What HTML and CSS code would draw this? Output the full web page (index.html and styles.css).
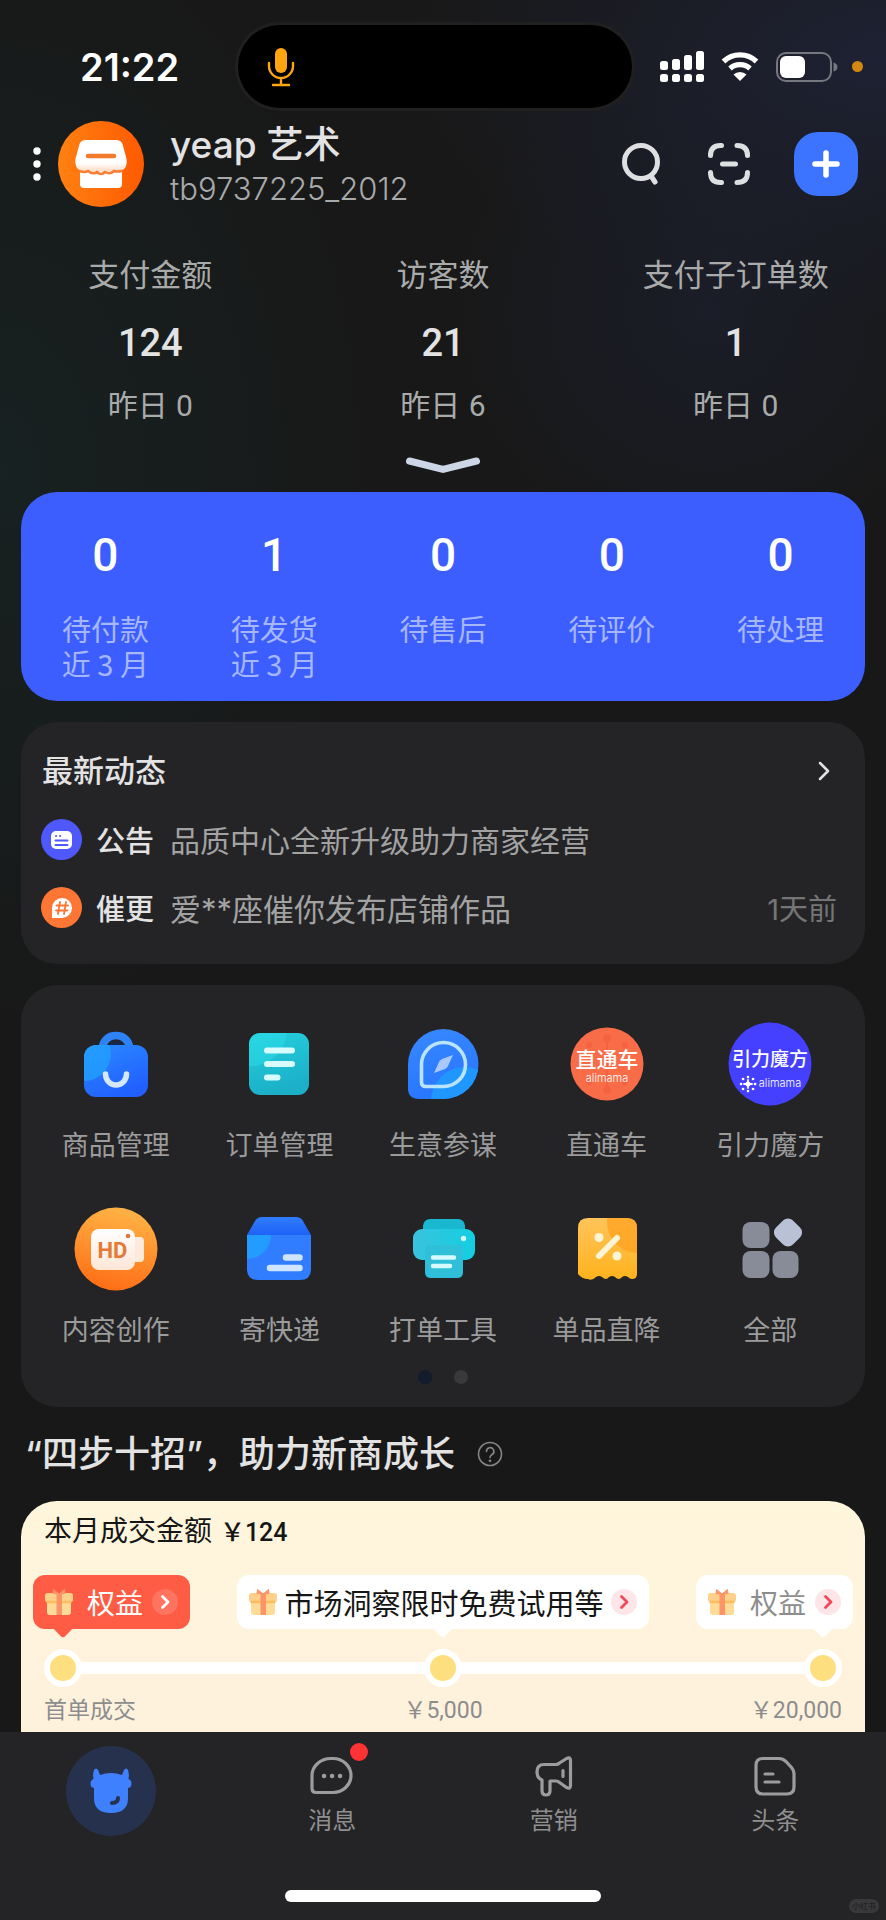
FILE: index.html
```html
<!DOCTYPE html>
<html lang="zh-CN">

<head>
    <meta charset="UTF-8" />
    <meta name="viewport" content="width=device-width, initial-scale=1.0" />
    <title>店铺工作台</title>
    <link rel="stylesheet" href="styles.css">
</head>

<body>
    <main class="page">
        <div class="status-bar">
            <span class="status-time">21:22</span>
            <div class="island">
                <svg width="28" height="40" viewBox="0 0 28 40" fill="none" stroke="#ffa50f" stroke-width="2.4" stroke-linecap="round">
                    <rect x="8" y="1" width="12" height="25" rx="6" fill="#ffa50f" stroke="none" />
                    <path d="M2 16v3a12 12 0 0 0 24 0v-3M14 31v6M6 38h16" />
                </svg>
            </div>
            <div class="status-icons">
                <svg width="44" height="32" viewBox="0 0 44 32" fill="#fff">
                    <rect x="0" y="10" width="8" height="9" rx="2.5" />
                    <rect x="12" y="8" width="8" height="11" rx="2.5" />
                    <rect x="24" y="4" width="8" height="15" rx="2.5" />
                    <rect x="36" y="0" width="8" height="19" rx="2.5" />
                    <rect x="0" y="23" width="8" height="8" rx="2.5" />
                    <rect x="12" y="23" width="8" height="8" rx="2.5" />
                    <rect x="24" y="23" width="8" height="8" rx="2.5" />
                    <rect x="36" y="23" width="8" height="8" rx="2.5" />
                </svg>
                <svg width="38" height="29" viewBox="0 0 38 29">
                    <path d="M2.500 9.500a24 24 0 0 1 33 0M9 16.500a15 15 0 0 1 20 0" fill="none" stroke="#fff" stroke-width="5.200" />
                    <path d="M12.500 22.500a9.500 9.500 0 0 1 13 0L19 29z" fill="#fff" />
                </svg>
                <svg width="62" height="30" viewBox="0 0 62 30">
                    <rect x="1" y="1" width="54" height="28" rx="9" fill="none" stroke="#77787f" stroke-width="2" />
                    <rect x="4" y="4" width="25" height="22" rx="6" fill="#fff" />
                    <path d="M57.500 10.500q4 1 4 4.500t-4 4.500z" fill="#77787f" />
                </svg>
                <span class="mic-dot"></span>
            </div>
        </div>

        <header class="shop-header">
            <button class="icon-btn more-btn" type="button" aria-label="更多">
                <svg width="8" height="34" viewBox="0 0 8 34" fill="#fff">
                    <circle cx="4" cy="4" r="3.700" />
                    <circle cx="4" cy="17" r="3.700" />
                    <circle cx="4" cy="30" r="3.700" />
                </svg>
            </button>
            <svg class="avatar" width="86" height="86" viewBox="0 0 86 86">
                <defs>
                    <linearGradient id="shopBg" x1="0" y1="0" x2="1" y2="0">
                        <stop offset="0" stop-color="#ff8112" />
                        <stop offset="1" stop-color="#ff5a00" />
                    </linearGradient>
                    <linearGradient id="awning" x1="0" y1="0" x2="0" y2="1">
                        <stop offset="0.700" stop-color="#fff" />
                        <stop offset="1" stop-color="#ffd4b8" />
                    </linearGradient>
                </defs>
                <circle cx="43" cy="43" r="43" fill="url(#shopBg)" />
                <path d="M22 48h42v15q0 4-4 4H26q-4 0-4-4z" fill="#fff" />
                <path d="M28 19h30q5 0 6.500 4l4 15q.5 2 0 5-1 7-8.500 7-5 3-9 0-4 4-8 0-4 4-8 0-4 3-9 0-7.500 0-8.500-7-.5-3 0-5l4-15q1.500-4 6.500-4z" fill="url(#awning)" />
                <path d="M22 50q5 2 8 0 5 4 9 1 4 4 8 0 5 3 9-1 4 1 8 0" fill="none" stroke="#f97d33" stroke-width="2.500" />
                <path d="M30 35h26" stroke="#f47a2e" stroke-width="4.500" stroke-linecap="round" />
            </svg>
            <div class="shop-info">
                <h1 class="shop-name">yeap 艺术</h1>
                <p class="shop-id">tb9737225_2012</p>
            </div>
            <div class="header-actions">
                <button class="icon-btn" type="button" aria-label="搜索">
                    <svg width="42" height="42" viewBox="0 0 42 42" fill="none" stroke="#dedfe1" stroke-width="5" stroke-linecap="round">
                        <circle cx="19" cy="19" r="16.500" />
                        <path d="M29 33l4 6" />
                    </svg>
                </button>
                <button class="icon-btn" type="button" aria-label="扫一扫">
                    <svg width="42" height="42" viewBox="0 0 42 42" fill="none" stroke="#dedfe1" stroke-width="5" stroke-linecap="round">
                        <path d="M2.500 12.500q0-10 10-10h1M29 2.500q10.500 0 10.500 10M2.500 29.500q0 10 10 10h1M29 39.500q10.500 0 10.500-10M14.500 21h13" />
                    </svg>
                </button>
                <button class="icon-btn add-btn" type="button" aria-label="新增">
                    <svg width="28" height="28" viewBox="0 0 28 28" stroke="#fff" stroke-width="5.500" stroke-linecap="round">
                        <path d="M14 3v22M3 14h22" />
                    </svg>
                </button>
            </div>
        </header>

        <section class="stats">
            <div class="stat">
                <span class="stat-label">支付金额</span>
                <span class="stat-value">124</span>
                <span class="stat-prev">昨日 <b>0</b></span>
            </div>
            <div class="stat">
                <span class="stat-label">访客数</span>
                <span class="stat-value">21</span>
                <span class="stat-prev">昨日 <b>6</b></span>
            </div>
            <div class="stat">
                <span class="stat-label">支付子订单数</span>
                <span class="stat-value">1</span>
                <span class="stat-prev">昨日 <b>0</b></span>
            </div>
        </section>

        <button class="icon-btn expand-btn" type="button" aria-label="展开">
            <svg width="76" height="18" viewBox="0 0 76 18" fill="none" stroke="#cdd6e6" stroke-width="7" stroke-linecap="round">
                <path d="M4.500 5L38 13.500 71.500 5" />
            </svg>
        </button>

        <section class="card orders">
            <a class="order" href="#"><span class="order-num">0</span><span class="order-label">待付款<br>近 3 月</span></a>
            <a class="order" href="#"><span class="order-num">1</span><span class="order-label">待发货<br>近 3 月</span></a>
            <a class="order" href="#"><span class="order-num">0</span><span class="order-label">待售后</span></a>
            <a class="order" href="#"><span class="order-num">0</span><span class="order-label">待评价</span></a>
            <a class="order" href="#"><span class="order-num">0</span><span class="order-label">待处理</span></a>
        </section>

        <section class="card news">
            <div class="news-head">
                <h2 class="news-title">最新动态</h2>
                <button class="icon-btn" type="button" aria-label="查看全部">
                    <svg width="12" height="20" viewBox="0 0 12 20" fill="none" stroke="#e2e2e3" stroke-width="2.500" stroke-linecap="round" stroke-linejoin="round">
                        <path d="M2 2l8 8-8 8" />
                    </svg>
                </button>
            </div>
            <a class="news-row" href="#">
                <svg width="41" height="41" viewBox="0 0 41 41">
                    <circle cx="20.500" cy="20.500" r="20.500" fill="#4f58fb" />
                    <rect x="10" y="12" width="21" height="18" rx="5" fill="#fff" />
                    <g stroke="#4f58fb" stroke-width="2" stroke-linecap="round">
                        <path d="M15 17h.1M19 17h.1M14.500 21.500h12M14.500 26h12" />
                    </g>
                </svg>
                <span class="news-tag">公告</span>
                <span class="news-text">品质中心全新升级助力商家经营</span>
            </a>
            <a class="news-row news-urge" href="#">
                <svg width="41" height="41" viewBox="0 0 41 41">
                    <circle cx="20.500" cy="20.500" r="20.500" fill="#fe7634" />
                    <path d="M11 31V20.500A10 10 0 1 1 21 31z" fill="#fff" />
                    <path d="M19 15l-2 12M25 15l-2 12M15.500 18.500h11.500M15 23.500h11.500" stroke="#fe7634" stroke-width="1.800" stroke-linecap="round" />
                </svg>
                <span class="news-tag">催更</span>
                <span class="news-text">爱**座催你发布店铺作品</span>
                <time class="news-time">1天前</time>
            </a>
        </section>

        <section class="card tools">
            <div class="tool-grid">
                <a class="tool" href="#">
                    <svg width="84" height="84" viewBox="0 0 84 84">
                        <defs>
                            <linearGradient id="bagBg" x1="0" y1="0" x2="0.500" y2="1">
                                <stop offset="0" stop-color="#2b8bff" />
                                <stop offset="1" stop-color="#2160ff" />
                            </linearGradient>
                            <clipPath id="bagClip"><rect x="10" y="23" width="64" height="52" rx="12" /></clipPath>
                        </defs>
                        <path d="M27.500 28Q30 13.500 42 13.500T56.500 28" fill="none" stroke="#2d83f6" stroke-width="7.500" />
                        <path d="M34 23q8-8 16 0z" fill="#12294c" />
                        <rect x="10" y="23" width="64" height="52" rx="12" fill="url(#bagBg)" />
                        <circle cx="10" cy="32" r="27" fill="#22a0ff" opacity="0.800" clip-path="url(#bagClip)" />
                        <path d="M31.500 52a10.500 11 0 0 0 21 0" fill="none" stroke="#d3e7ff" stroke-width="5.500" stroke-linecap="round" />
                    </svg>
                    <span class="tool-label">商品管理</span>
                </a>
                <a class="tool" href="#">
                    <svg width="84" height="84" viewBox="0 0 84 84">
                        <defs>
                            <linearGradient id="docBg" x1="0" y1="0" x2="0.300" y2="1">
                                <stop offset="0" stop-color="#25cfdd" />
                                <stop offset="1" stop-color="#1bb0c8" />
                            </linearGradient>
                            <clipPath id="docClip"><rect x="12" y="11" width="60" height="62" rx="11" /></clipPath>
                        </defs>
                        <rect x="12" y="11" width="60" height="62" rx="11" fill="url(#docBg)" />
                        <circle cx="14" cy="8" r="36" fill="#2ce0e8" opacity="0.450" clip-path="url(#docClip)" />
                        <path d="M30 28.500h25M30 42h25M30 55.500h10.500" stroke="#d8fbff" stroke-width="6" stroke-linecap="round" />
                    </svg>
                    <span class="tool-label">订单管理</span>
                </a>
                <a class="tool" href="#">
                    <svg width="84" height="84" viewBox="0 0 84 84">
                        <defs>
                            <linearGradient id="compassBg" x1="0" y1="0" x2="0.300" y2="1">
                                <stop offset="0" stop-color="#398cff" />
                                <stop offset="1" stop-color="#2874ff" />
                            </linearGradient>
                            <clipPath id="compassClip"><path d="M42.500 7a35 35 0 0 1 0 70H18Q7 77 7 66V42.500A35.500 35.500 0 0 1 42.500 7z" /></clipPath>
                        </defs>
                        <g clip-path="url(#compassClip)">
                            <rect width="84" height="84" fill="url(#compassBg)" />
                            <circle cx="64" cy="79" r="34" fill="#1f97ff" />
                        </g>
                        <path d="M42.500 20.500a22 22 0 1 1 0 44H25q-4.500 0-4.500-4.500V42.500a22 22 0 0 1 22-22z" fill="none" stroke="#b9e4ff" stroke-width="3.600" />
                        <path d="M33 51l5-11q1-2 3-3l11-4-5 11q-1 2-3 3z" fill="#a9c8ff" />
                    </svg>
                    <span class="tool-label">生意参谋</span>
                </a>
                <a class="tool" href="#">
                    <svg width="84" height="84" viewBox="0 0 84 84">
                        <circle cx="42" cy="42" r="36.500" fill="#f86c48" />
                        <g stroke="#f04e35" stroke-width="2" fill="#f04e35" opacity="0.300">
                            <path d="M42 16v52" />
                            <circle cx="42" cy="16" r="3" />
                            <circle cx="42" cy="68" r="3" />
                            <circle cx="24" cy="23" r="2" />
                            <circle cx="60" cy="23" r="2" />
                            <circle cx="24" cy="60" r="2" />
                            <circle cx="60" cy="60" r="2" />
                        </g>
                        <text class="logo-zh" x="42" y="45" font-size="21">直通车</text>
                        <text class="logo-en" x="42" y="60" font-size="11">alimama</text>
                    </svg>
                    <span class="tool-label">直通车</span>
                </a>
                <a class="tool" href="#">
                    <svg width="84" height="84" viewBox="0 0 84 84">
                        <circle cx="42" cy="42" r="41.500" fill="#4540ff" />
                        <text class="logo-zh" x="42" y="44" font-size="19">引力魔方</text>
                        <g stroke="#fff" stroke-width="2.600" stroke-linecap="round">
                            <path d="M20 55v.1M20 69v.1M13 62h.1M27 62h.1M15 57h.1M25 57h.1M15 67h.1M25 67h.1" />
                            <path d="M20 58v8M16 62h8" stroke-width="1.800" />
                            <circle cx="20" cy="62" r="2.500" fill="#fff" stroke="none" />
                        </g>
                        <text class="logo-en" x="52" y="65" font-size="11">alimama</text>
                    </svg>
                    <span class="tool-label">引力魔方</span>
                </a>
                <a class="tool" href="#">
                    <svg width="84" height="84" viewBox="0 0 84 84">
                        <defs>
                            <linearGradient id="hdBg" x1="0.600" y1="0" x2="0.400" y2="1">
                                <stop offset="0" stop-color="#ffb445" />
                                <stop offset="1" stop-color="#ff6d15" />
                            </linearGradient>
                            <linearGradient id="hdCam" x1="0" y1="0" x2="0" y2="1">
                                <stop offset="0" stop-color="#fff" />
                                <stop offset="1" stop-color="#ffe6d6" />
                            </linearGradient>
                        </defs>
                        <circle cx="42" cy="42" r="41.500" fill="url(#hdBg)" />
                        <rect x="58" y="30" width="12" height="25" rx="4" fill="#ffe9db" />
                        <rect x="17" y="22" width="44" height="41" rx="8" fill="url(#hdCam)" />
                        <circle cx="54" cy="29" r="2.300" fill="#e0763a" />
                        <text class="logo-hd" x="38.500" y="51" font-size="22">HD</text>
                    </svg>
                    <span class="tool-label">内容创作</span>
                </a>
                <a class="tool" href="#">
                    <svg width="84" height="84" viewBox="0 0 84 84">
                        <defs>
                            <linearGradient id="lidBg" x1="0" y1="0" x2="0" y2="1">
                                <stop offset="0" stop-color="#2f7dff" />
                                <stop offset="1" stop-color="#1f62f5" />
                            </linearGradient>
                            <clipPath id="boxClip"><path d="M10 28h64v34q0 11-11 11H21Q10 73 10 62z" /></clipPath>
                        </defs>
                        <path d="M10 28l8-14q2.500-4 7-4h34q4.500 0 7 4l8 14z" fill="url(#lidBg)" />
                        <g clip-path="url(#boxClip)">
                            <rect x="10" y="28" width="64" height="46" fill="#307eff" />
                            <circle cx="10" cy="28" r="24" fill="#229cff" />
                        </g>
                        <path d="M49 50.500h13.500M33 61h29.500" stroke="#cfe4ff" stroke-width="6.500" stroke-linecap="round" />
                    </svg>
                    <span class="tool-label">寄快递</span>
                </a>
                <a class="tool" href="#">
                    <svg width="84" height="84" viewBox="0 0 84 84">
                        <defs>
                            <linearGradient id="printBg" x1="0" y1="0" x2="1" y2="0">
                                <stop offset="0" stop-color="#3ac3dc" />
                                <stop offset="1" stop-color="#12cfe2" />
                            </linearGradient>
                        </defs>
                        <rect x="22" y="12" width="42" height="24" rx="7" fill="#1ab7d0" />
                        <rect x="12" y="22" width="62" height="31" rx="9" fill="url(#printBg)" />
                        <path d="M28 38h30q4 0 4 4v23q0 6-6 6H30q-6 0-6-6V42q0-4 4-4z" fill="#30bfd9" />
                        <path d="M32 50.500h21M32 59h17" stroke="#d5f9ff" stroke-width="4.500" stroke-linecap="round" />
                        <circle cx="62.500" cy="31.500" r="2.700" fill="#d5f9ff" />
                    </svg>
                    <span class="tool-label">打单工具</span>
                </a>
                <a class="tool" href="#">
                    <svg width="84" height="84" viewBox="0 0 84 84">
                        <defs>
                            <linearGradient id="couponBg" x1="0" y1="0" x2="0" y2="1">
                                <stop offset="0" stop-color="#ffc45a" />
                                <stop offset="1" stop-color="#ffb21c" />
                            </linearGradient>
                            <clipPath id="couponClip"><path d="M23 11h39q10 0 10 10v46q0 5-5 5-2 0-4-2-3-2-6 0-3 4-7 0-3-2-6 0-3 4-7 0-3-2-6 0-4 4-8 2-6 0-10-5V21q0-10 10-10z" /></clipPath>
                        </defs>
                        <g clip-path="url(#couponClip)">
                            <rect x="13" y="11" width="60" height="62" fill="url(#couponBg)" />
                            <circle cx="73" cy="15" r="31" fill="#ff9d1a" opacity="0.650" />
                        </g>
                        <path d="M34 49l18-18" stroke="#fff4d6" stroke-width="6" stroke-linecap="round" />
                        <circle cx="34" cy="30.500" r="4.500" fill="#fff4d6" />
                        <circle cx="52" cy="49" r="4.500" fill="#fff4d6" />
                    </svg>
                    <span class="tool-label">单品直降</span>
                </a>
                <a class="tool" href="#">
                    <svg width="84" height="84" viewBox="0 0 84 84" fill="#878c98">
                        <rect x="14.500" y="15" width="27" height="26" rx="8" />
                        <rect x="14.500" y="44" width="27" height="27" rx="8" />
                        <rect x="44.500" y="44" width="26" height="27" rx="8" />
                        <rect x="48" y="13.500" width="24" height="24" rx="7" fill="#b8c1d5" transform="rotate(45 60 25.500)" />
                    </svg>
                    <span class="tool-label">全部</span>
                </a>
            </div>
            <div class="pager"><i class="pager-dot active"></i><i class="pager-dot"></i></div>
        </section>

        <div class="growth-head">
            <h2 class="growth-title">“四步十招”，助力新商成长</h2>
            <button class="icon-btn" type="button" aria-label="说明">
                <svg width="26" height="26" viewBox="0 0 26 26" fill="none" stroke="#858585" stroke-width="1.600" stroke-linecap="round">
                    <circle cx="13" cy="13" r="11.500" />
                    <path d="M9.500 10.500a3.700 3.700 0 1 1 5.600 3q-2.100 1.200-2.100 3" />
                    <circle cx="13" cy="19.800" r="0.600" fill="#858585" />
                </svg>
            </button>
        </div>

        <!-- shared icons for the reward tags -->
        <svg class="sprite" width="0" height="0">
            <symbol id="gift" viewBox="0 0 28 28">
                <rect x="2" y="9" width="24" height="18" rx="3" fill="#fedc98" />
                <rect x="0" y="5" width="28" height="9" rx="2.500" fill="#ffd08a" />
                <path d="M1.500 14h25" stroke="#fdbd5c" stroke-width="2.500" />
                <path d="M11.500 6h5.500v21h-5.500z" fill="#fb9468" />
                <path d="M14 6L8.500 1.500 8 5.500zM14 6l5.500-4.500.5 4z" fill="#fb9468" stroke="#fb9468" stroke-linejoin="round" />
            </symbol>
            <symbol id="go" viewBox="0 0 26 26">
                <circle cx="13" cy="13" r="13" fill="currentColor" opacity="0.140" />
                <path d="M10.500 7.500l5.500 5.500-5.500 5.500" fill="none" stroke="currentColor" stroke-width="2.800" stroke-linecap="round" stroke-linejoin="round" />
            </symbol>
        </svg>

        <section class="growth">
            <p class="growth-amount">本月成交金额 <b>￥124</b></p>
            <div class="rewards">
                <button class="reward reward-current" type="button">
                    <svg width="28" height="28"><use href="#gift" /></svg>
                    <span class="reward-text">权益</span>
                    <svg class="reward-go" width="26" height="26"><use href="#go" /></svg>
                </button>
                <button class="reward reward-wide" type="button">
                    <svg width="28" height="28"><use href="#gift" /></svg>
                    <span class="reward-text">市场洞察限时免费试用等</span>
                    <svg class="reward-go" width="26" height="26"><use href="#go" /></svg>
                </button>
                <button class="reward reward-last" type="button">
                    <svg width="28" height="28"><use href="#gift" /></svg>
                    <span class="reward-text">权益</span>
                    <svg class="reward-go" width="26" height="26"><use href="#go" /></svg>
                </button>
            </div>
            <div class="track"><i class="node"></i><i class="node"></i><i class="node"></i></div>
            <div class="track-labels">
                <span>首单成交</span>
                <span>￥5,000</span>
                <span>￥20,000</span>
            </div>
        </section>
    </main>

    <nav class="tabbar">
        <div class="tabs">
            <a class="tab tab-home" href="#" aria-label="首页">
                <svg width="44" height="46" viewBox="0 0 44 46">
                    <path d="M5 2q2-3 4 0l2 5q11-4 22 0l2-5q2-3 4 0 1.500 4 .5 9 3 1 3 4.500 0 4-3.500 4.500v10q0 15-17 15T5 30V20q-3.500-.5-3.500-4.500 0-3.500 3-4.500-1-5 .5-9z" fill="#3f80ff" />
                    <path d="M23 35q6 0 6-5" fill="none" stroke="#26324f" stroke-width="4" stroke-linecap="round" />
                </svg>
            </a>
            <a class="tab" href="#">
                <span class="tab-icon">
                    <svg width="44" height="42" viewBox="0 0 44 42" fill="none" stroke="#9c9c9d" stroke-width="3.200">
                        <path d="M21 3.500h2a18 17 0 0 1 0 34H6q-4 0-4-4V20.500a19 17 0 0 1 19-17z" />
                        <path d="M14 21h.1M22 21h.1M30 21h.1" stroke-width="4.500" stroke-linecap="round" />
                    </svg>
                    <i class="badge"></i>
                </span>
                <span class="tab-label">消息</span>
            </a>
            <a class="tab" href="#">
                <span class="tab-icon">
                    <svg width="44" height="42" viewBox="0 0 44 42" fill="none" stroke="#9c9c9d" stroke-width="3.200" stroke-linejoin="round" stroke-linecap="round">
                        <path d="M12 9.500h12q2 0 3.500-1.500l7-4.500q4-2 4 2v25q0 4-4 2l-7-5q-1.500-1.500-3.500-1.500h-6V36q0 4-4 4t-4-4V25q-5-2-5-8 0-7.500 7-7.500zM31 15.500v6" />
                    </svg>
                </span>
                <span class="tab-label">营销</span>
            </a>
            <a class="tab" href="#">
                <span class="tab-icon">
                    <svg width="44" height="42" viewBox="0 0 44 42" fill="none" stroke="#9c9c9d" stroke-width="3.200" stroke-linecap="round">
                        <path d="M10 3.500h16q4 0 7 3l5.500 6q2.500 3 2.500 6V32q0 7-7 7H10q-7 0-7-7V10.500q0-7 7-7zM12 19h8M12 27h14" />
                    </svg>
                </span>
                <span class="tab-label">头条</span>
            </a>
        </div>
        <div class="home-indicator"></div>
        <span class="watermark">小红书</span>
    </nav>
</body>

</html>
```

FILE: styles.css
```css
* {
    box-sizing: border-box;
}

body {
    margin: 0;
    height: 100vh;
    display: flex;
    flex-direction: column;
    background: #181818;
    color: #e3e3e4;
    font-family: Inter, "Noto Sans CJK SC", sans-serif;
}

h1,
h2,
p {
    margin: 0;
}

a {
    color: inherit;
    text-decoration: none;
}

svg {
    display: block;
    flex-shrink: 0;
}

.page {
    flex: 1;
    min-height: 0;
    overflow-y: auto;
    scrollbar-width: none;
    background:
        radial-gradient(ellipse 370px 560px at 0 470px, #17282799, #17282700) no-repeat,
        radial-gradient(circle 260px at 80% 310px, #1c2030aa, #1c203000) no-repeat,
        radial-gradient(ellipse 480px 260px at 100% 60px, #1e2133, #1e213300) no-repeat,
        #181818;
}

.icon-btn {
    background: none;
    border: none;
    padding: 0;
    cursor: pointer;
}

/* status bar */
.status-bar {
    display: grid;
    grid-template-columns: 238px 1fr 254px;
    align-items: center;
    padding-top: 25px;
}

.status-time {
    padding-left: 80px;
    font-size: 38px;
    font-weight: 600;
    line-height: 44px;
    color: #fff;
}

.island {
    height: 83px;
    border-radius: 42px;
    background: #000;
    box-shadow: 0 0 0 3px #202021;
    display: flex;
    align-items: center;
    padding-left: 29px;
}

.status-icons {
    display: flex;
    align-items: center;
    gap: 17px;
    padding-left: 28px;
}

.mic-dot {
    width: 11px;
    height: 11px;
    border-radius: 50%;
    background: #d28812;
    margin-left: -3px;
}

/* shop header */
.shop-header {
    display: flex;
    align-items: center;
    padding: 10px 28px 0 33px;
}

.avatar {
    margin-left: 17px;
}

.more-btn,
.header-actions {
    flex-shrink: 0;
}

.shop-info {
    flex: 1;
    padding: 4px 0 0 26px;
}

.shop-name {
    font-size: 37px;
    font-weight: 500;
    line-height: 46px;
}

.shop-id {
    font-size: 31px;
    font-weight: 300;
    line-height: 42px;
    color: #a8a9aa;
}

.header-actions {
    display: flex;
    align-items: center;
    gap: 44px;
}

.add-btn {
    width: 64px;
    height: 64px;
    border-radius: 24px;
    background: #3d74ff;
    display: flex;
    align-items: center;
    justify-content: center;
}

/* today's numbers */
.stats {
    display: grid;
    grid-template-columns: repeat(3, 1fr);
    padding: 42px 4px 0;
}

.stat {
    display: flex;
    flex-direction: column;
    align-items: center;
}

.stat-label {
    font-size: 31px;
    line-height: 46px;
    color: #a9aaaa;
}

.stat-value {
    font-family: Roboto, sans-serif;
    font-size: 38px;
    line-height: 50px;
    font-weight: 500;
    margin: 20px 0 14px;
}

.stat-prev {
    font-size: 30px;
    line-height: 46px;
    color: #a9aaaa;
}

.stat-prev b {
    font-family: Roboto, sans-serif;
    font-weight: 400;
}

.expand-btn {
    display: block;
    margin: 27px auto 0;
}

/* cards */
.card {
    margin: 21px 21px 0;
    border-radius: 36px;
    background: #242426;
}

.orders {
    display: grid;
    grid-template-columns: repeat(5, 1fr);
    margin-top: 18px;
    padding: 33px 0 20px;
    background: #3c5eff;
}

.order {
    display: flex;
    flex-direction: column;
    align-items: center;
    gap: 26px;
    text-align: center;
}

.order-num {
    font-family: Roboto, sans-serif;
    font-size: 46px;
    font-weight: 500;
    line-height: 60px;
    color: #fff;
}

.order-label {
    font-family: "Noto Sans CJK SC", sans-serif;
    font-size: 29px;
    line-height: 35px;
    color: #a6b6ff;
}

.news {
    padding: 27px 28px 33px 20px;
}

.news-head {
    display: flex;
    align-items: center;
    justify-content: space-between;
    padding: 0 7px 0 1px;
    margin-bottom: 22px;
}

.news-title {
    font-size: 31px;
    font-weight: 500;
    line-height: 44px;
}

.news-row {
    display: flex;
    align-items: center;
    height: 48px;
}

.news-row + .news-row {
    margin-top: 20px;
}

.news-tag {
    margin: 0 16px 0 14px;
    font-size: 29px;
    font-weight: 500;
}

.news-text {
    flex: 1;
    font-size: 30px;
    color: #a2a2a3;
}

.news-urge .news-text {
    font-size: 31px;
}

.news-time {
    font-size: 29px;
    color: #757576;
}

/* tool shortcuts */
.tools {
    padding: 37px 13px 23px;
}

.tool-grid {
    display: grid;
    grid-template-columns: repeat(5, 1fr);
    row-gap: 43px;
}

.tool {
    display: flex;
    flex-direction: column;
    align-items: center;
    gap: 22px;
}

.tool-label {
    font-size: 27px;
    line-height: 36px;
    color: #9b9b9c;
}

.logo-zh,
.logo-en,
.logo-hd {
    fill: #fff;
    text-anchor: middle;
}

.logo-zh {
    font-weight: 500;
}

.logo-en {
    font-weight: 300;
}

.logo-hd {
    fill: #e57a35;
    font-family: Roboto, sans-serif;
    font-weight: 700;
}

.pager {
    display: flex;
    justify-content: center;
    gap: 22px;
    margin-top: 21px;
}

.pager-dot {
    width: 14px;
    height: 14px;
    border-radius: 50%;
    background: #39393b;
}

.pager-dot.active {
    background: #121c2b;
}

/* growth plan */
.growth-head {
    display: flex;
    align-items: center;
    gap: 22px;
    padding: 22px 25px;
}

.growth-title {
    font-size: 36px;
    font-weight: 500;
    line-height: 50px;
}

.sprite {
    position: absolute;
}

.growth {
    margin: 0 21px;
    padding: 10px 12px 60px;
    border-radius: 36px;
    background: linear-gradient(#fff6dc, #fff2dd 180px);
    color: #161616;
}

.growth-amount {
    padding-left: 11px;
    font-size: 28px;
    line-height: 40px;
}

.growth-amount b {
    font-family: Roboto, "Noto Sans CJK SC", sans-serif;
    font-size: 25px;
    font-weight: 500;
}

.rewards {
    display: flex;
    justify-content: space-between;
    margin-top: 22px;
}

.reward {
    position: relative;
    display: flex;
    align-items: center;
    height: 54px;
    padding: 0 12px;
    border: none;
    border-radius: 12px;
    background: #fff;
    font-family: inherit;
    font-size: 28px;
    color: #161616;
    cursor: pointer;
}

/* pointer towards the node below */
.reward::after {
    content: "";
    position: absolute;
    left: 50%;
    bottom: -6px;
    width: 16px;
    height: 16px;
    margin-left: -8px;
    border-radius: 3px;
    background: inherit;
    transform: rotate(45deg);
}

.reward-text {
    margin: 0 9px 0 14px;
}

.reward-go {
    color: #f0475a;
}

.reward-wide {
    font-size: 29px;
}

.reward-wide .reward-text {
    margin: 0 7px;
}

.reward-current {
    background: #ff5c45;
    color: #fff;
}

.reward-current .reward-go {
    color: #fff;
}

.reward-current::after {
    left: 30px;
}

.reward-last {
    color: #8d8d8d;
}

.reward-last::after {
    left: auto;
    right: 22px;
}

.track {
    display: flex;
    justify-content: space-between;
    margin: 20px 11px 0;
    background: linear-gradient(#fff, #fff) center / calc(100% - 20px) 12px no-repeat;
}

.node {
    width: 38px;
    height: 38px;
    border: 6px solid #fff;
    border-radius: 50%;
    background: #fedf80;
}

.track-labels {
    display: grid;
    grid-template-columns: 1fr auto 1fr;
    padding: 8px 11px 0;
    font-family: Roboto, "Noto Sans CJK SC", sans-serif;
    font-size: 23px;
    line-height: 32px;
    color: #8d8d8d;
}

.track-labels span:last-child {
    text-align: right;
}

/* bottom tabs */
.tabbar {
    position: relative;
    background: #242426;
    padding: 14px 0 18px;
}

.tabs {
    display: grid;
    grid-template-columns: repeat(4, 1fr);
}

.tab {
    display: flex;
    flex-direction: column;
    align-items: center;
    padding-top: 9px;
}

.tab-home {
    width: 90px;
    height: 90px;
    justify-self: center;
    justify-content: center;
    padding: 0;
    border-radius: 50%;
    background: #26324d;
}

.tab-icon {
    position: relative;
}

.badge {
    position: absolute;
    top: -12px;
    right: -14px;
    width: 18px;
    height: 18px;
    border-radius: 50%;
    background: #ff3234;
}

.tab-label {
    margin-top: 8px;
    font-size: 24px;
    line-height: 32px;
    color: #8f8f90;
}

.home-indicator {
    width: 316px;
    height: 12px;
    margin: 53px auto 0;
    border-radius: 6px;
    background: #fff;
}

.watermark {
    position: absolute;
    right: 7px;
    bottom: 7px;
    padding: 0 3px;
    border-radius: 7px;
    background: #39393b;
    font-size: 8px;
    line-height: 14px;
    color: #19191a;
}
```
